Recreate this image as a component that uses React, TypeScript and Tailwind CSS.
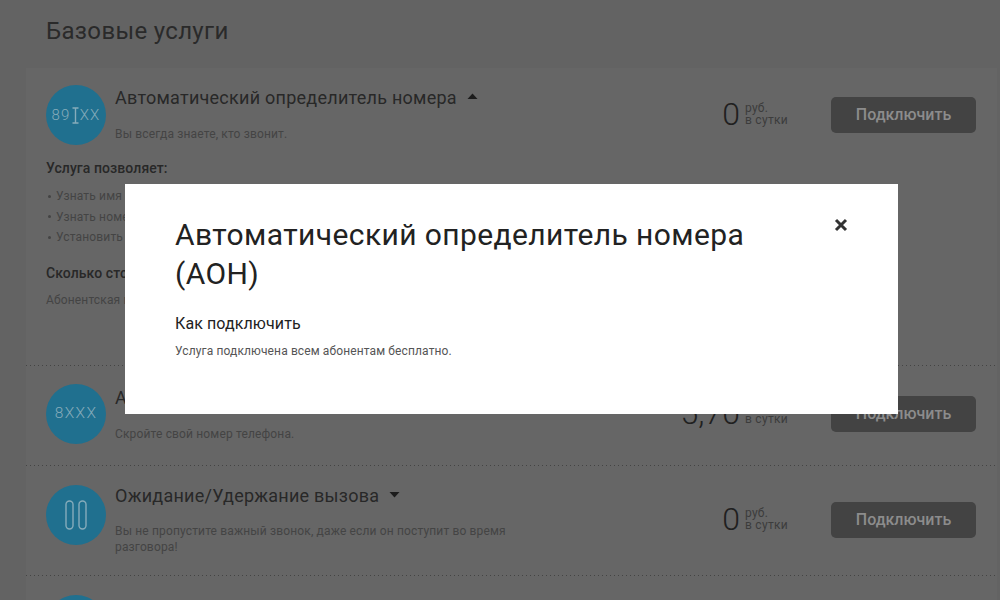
import React from "react";

function Circle({ children }: { children: React.ReactNode }) {
  return (
    <div className="w-[60px] h-[60px] rounded-full bg-[#20708f] flex items-center justify-center shrink-0 text-[#86acbb]">
      {children}
    </div>
  );
}

function Caret({ up }: { up?: boolean }) {
  return (
    <svg width="11" height="7" viewBox="0 0 11 7" className="ml-[10px] mt-[-1px]">
      <path d={up ? "M5.5 0.5L10.5 6H0.5Z" : "M0.5 1H10.5L5.5 6.5Z"} fill="#1c1c1c" />
    </svg>
  );
}

function Price({ value }: { value: string }) {
  return (
    <div className="flex items-center justify-end w-[120px] mr-[43px]">
      <span className="text-[32px] leading-[32px] font-light text-[#202020]">{value}</span>
      <span className="ml-[5px] text-[12px] tracking-[0.3px] leading-[12px] text-[#3c3c3c] whitespace-nowrap">
        руб.
        <br />
        в сутки
      </span>
    </div>
  );
}

function ConnectButton() {
  return (
    <button className="w-[145px] h-[36px] rounded-[5px] bg-[#434343] text-[#8c8c8c] text-[16px] font-medium flex items-center justify-center">
      Подключить
    </button>
  );
}

function Divider() {
  return <div className="h-px bg-[repeating-linear-gradient(90deg,#444444_0_1px,transparent_1px_4px)]" />;
}

function Bullet({ children }: { children: React.ReactNode }) {
  return (
    <li className="flex items-center">
      <span className="w-[3px] h-[3px] rounded-full bg-[#444444] ml-[2px] mr-[5px]" />
      <span>{children}</span>
    </li>
  );
}

export default function App() {
  return (
    <div className="relative w-[1000px] h-[600px] overflow-hidden bg-[#636363] font-['Roboto',sans-serif] text-[#282828]">
      <h1 className="pl-[46px] pt-[17px] text-[24px] leading-[28px] tracking-[0.33px] text-[#2a2a2a]">Базовые услуги</h1>

      <div className="mt-[23px] ml-[26px] mr-[3px] bg-[#666666]">
        <div className="h-[297px] pl-[20px] pr-[21px] pt-[17px]">
          <div className="flex">
            <Circle>
              <span className="flex items-center text-[15px] tracking-[1.3px] font-light">
                89
                <svg width="7" height="17" viewBox="0 0 7 17" className="mx-[1px]">
                  <path d="M0.5 1H6.5M3.5 1V16M0.5 16H6.5" stroke="#86acbb" strokeWidth="1.4" fill="none" />
                </svg>
                XX
              </span>
            </Circle>
            <div className="ml-[9px] flex-1">
              <div className="flex items-center h-[24px]">
                <span className="text-[18px] tracking-[0.25px]">Автоматический определитель номера</span>
                <Caret up />
              </div>
              <p className="mt-[17px] text-[12px] leading-[16px] tracking-[0.15px] text-[#444444]">Вы всегда знаете, кто звонит.</p>
            </div>
            <div className="flex pt-[12px] items-start">
              <div className="mt-[1px]"><Price value="0" /></div>
              <ConnectButton />
            </div>
          </div>
          <p className="mt-[14px] text-[14px] leading-[18px] tracking-[0.08px] font-medium text-[#282828]">Услуга позволяет:</p>
          <ul className="mt-[9px] text-[12px] tracking-[0.15px] text-[#444444] leading-[20.5px]">
            <Bullet>Узнать имя звонящего</Bullet>
            <Bullet>Узнать номер телефона</Bullet>
            <Bullet>Установить мелодию</Bullet>
          </ul>
          <p className="mt-[16px] text-[14px] leading-[18px] tracking-[0.08px] font-medium text-[#282828]">Сколько стоит</p>
          <p className="mt-[9px] text-[12px] leading-[18px] tracking-[0.15px] text-[#444444]">Абонентская плата</p>
        </div>
        <Divider />
        <div className="h-[99px] pl-[20px] pr-[21px] pt-[18px] flex">
          <Circle>
            <span className="text-[15.5px] tracking-[1.4px] font-light">8XXX</span>
          </Circle>
          <div className="ml-[9px] flex-1">
            <div className="flex items-center h-[26px]">
              <span className="text-[18px] tracking-[0.25px]">Анти-АОН</span>
            </div>
            <p className="mt-[16px] text-[12px] leading-[16px] tracking-[0.15px] text-[#444444]">Скройте свой номер телефона.</p>
          </div>
          <div className="flex pt-[12px] items-start">
            <div className="mt-[1px]"><Price value="5,70" /></div>
            <ConnectButton />
          </div>
        </div>
        <Divider />
        <div className="h-[109px] pl-[20px] pr-[21px] pt-[19px] flex">
          <Circle>
            <svg width="22" height="30" viewBox="0 0 22 30" fill="none" stroke="#86acbb" strokeWidth="1.4">
              <rect x="1" y="1" width="7" height="28" rx="3.5" />
              <rect x="14" y="1" width="7" height="28" rx="3.5" />
            </svg>
          </Circle>
          <div className="ml-[9px] flex-1">
            <div className="flex items-center h-[20px]">
              <span className="text-[18px] tracking-[0.25px]">Ожидание/Удержание вызова</span>
              <Caret />
            </div>
            <p className="mt-[18px] w-[410px] text-[12px] leading-[16px] tracking-[0.15px] text-[#444444]">
              Вы не пропустите важный звонок, даже если он поступит во время разговора!
            </p>
          </div>
          <div className="flex pt-[17px] items-start">
            <div className="mt-[1px]"><Price value="0" /></div>
            <ConnectButton />
          </div>
        </div>
        <Divider />
        <div className="pl-[20px] pt-[19px]">
          <Circle>
            <span />
          </Circle>
        </div>
      </div>

      <div className="absolute left-[125px] top-[184px] w-[773px] h-[230px] bg-white pl-[50px] pt-[31px] text-[#222222]">
        <h2 className="w-[600px] text-[30px] leading-[39px] tracking-[0.4px]">Автоматический определитель номера (АОН)</h2>
        <h3 className="mt-[21px] text-[16px] leading-[20px] tracking-[0.1px]">Как подключить</h3>
        <p className="mt-[9px] text-[12px] leading-[16px] tracking-[0.12px] text-[#555555]">Услуга подключена всем абонентам бесплатно.</p>
        <svg width="14" height="14" viewBox="0 0 14 14" className="absolute left-[709px] top-[34px]">
          <path d="M2 2L12 12M12 2L2 12" stroke="#333333" strokeWidth="3" />
        </svg>
      </div>
    </div>
  );
}
